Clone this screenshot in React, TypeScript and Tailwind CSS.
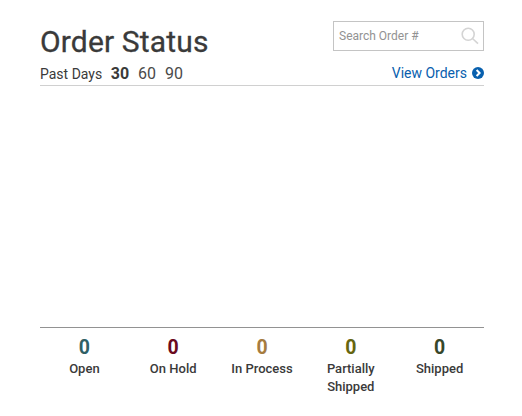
const statuses = [
  { label: "Open", color: "text-[#2f6065]" },
  { label: "On Hold", color: "text-[#6b0a20]" },
  { label: "In Process", color: "text-[#a67c3f]" },
  { label: "Partially Shipped", color: "text-[#66660f]" },
  { label: "Shipped", color: "text-[#37472a]" },
];

export default function App() {
  return (
    <main className="h-[416px] w-[522px] bg-white pl-10 pt-[21px] font-['Roboto',sans-serif] text-[#3a3a3a]">
      <section className="w-[444px]">
        <header className="flex h-[65px] justify-between border-b border-[#d0d0d0]">
          <div>
            <h1 className="mt-[3px] text-[30px] leading-[36px] tracking-[0.15px] [-webkit-text-stroke:0.3px_#3a3a3a]">Order Status</h1>
            <div className="mt-1 flex items-baseline text-[16px] leading-[20px]">
              <span className="mr-[8.5px] text-[14px]">Past Days</span>
              <b className="mr-[9px]">30</b>
              <span className="mr-[9px] text-[#4a4a4a]">60</span>
              <span className="text-[#4a4a4a]">90</span>
            </div>
          </div>
          <div className="flex flex-col items-end">
            <div className="flex h-[30px] w-[151px] items-center justify-between border border-[#c4c4c4] pl-[5px] pr-1">
              <span className="text-[12px] text-[#929292]">Search Order #</span>
              <svg className="size-[18px]" viewBox="0 0 18 18" fill="none" stroke="#d4d4d4" strokeWidth="1.6">
                <circle cx="7.2" cy="7.2" r="6" />
                <path d="M11.5 11.5l5.5 5.2" />
              </svg>
            </div>
            <a className="mt-[12px] flex items-center gap-[5px] text-[14px] leading-[20px] text-[#0860ae]">
              View Orders
              <svg className="size-3" viewBox="0 0 12 12">
                <circle cx="6" cy="6" r="6" fill="#0860ae" />
                <path d="M4.6 3l3 3-3 3" fill="none" stroke="white" strokeWidth="2" />
              </svg>
            </a>
          </div>
        </header>
        <div className="h-[242px] border-b border-[#929292]" />
        <div className="grid grid-cols-5 pt-[9px] text-center">
          {statuses.map((s) => (
            <div key={s.label} className="px-3">
              <div className={`text-[19.5px] font-bold leading-[22px] ${s.color}`}>0</div>
              <div className="mt-px text-[13px] font-medium leading-[18px]">{s.label}</div>
            </div>
          ))}
        </div>
      </section>
    </main>
  );
}
